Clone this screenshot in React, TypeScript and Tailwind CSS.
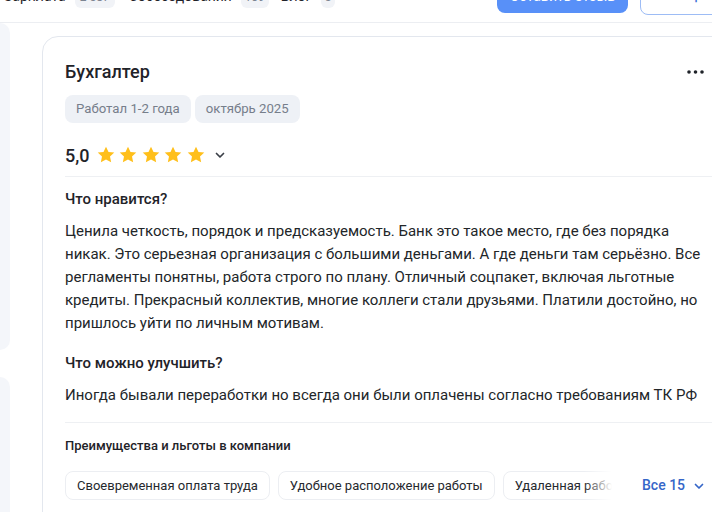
import React from "react";

const Star = () => (
  <svg width="20" height="20" viewBox="0 0 24 24" className="shrink-0">
    <path
      d="M12 2l3 6.3 6.9.8-5.1 4.8 1.4 6.9L12 17.4l-6.2 3.4 1.4-6.9-5.1-4.8 6.9-.8z"
      fill="#ffbf1a"
    />
  </svg>
);

const Chevron = ({ className }: { className?: string }) => (
  <svg width="12" height="12" viewBox="0 0 12 12" className={className}>
    <path d="M2.5 4.5L6 8l3.5-3.5" fill="none" stroke="currentColor" strokeWidth="1.7" strokeLinecap="round" strokeLinejoin="round" />
  </svg>
);

const chips = ["Своевременная оплата труда", "Удобное расположение работы", "Удаленная работа"];

export default function App() {
  return (
    <div className="w-[712px] h-[512px] overflow-hidden bg-white text-[#1f2329]" style={{ fontFamily: "Roboto, 'Noto Sans', sans-serif" }}>
      {/* Top nav (scrolled) */}
      <div className="h-[23px] border-b border-[#eceef2] overflow-hidden">
        <div className="-mt-[30px] h-[53px] flex items-center text-[14px]">
          <span className="ml-[4px]">Зарплата</span>
          <span className="ml-[9px] w-[40px] h-[22px] rounded-[6px] bg-[#f1f3f7] text-[#7c8491] text-[12px] flex items-center justify-center">2 587</span>
          <span className="ml-[14px]">Собеседования</span>
          <span className="ml-[9px] w-[28px] h-[22px] rounded-[6px] bg-[#f1f3f7] text-[#7c8491] text-[12px] flex items-center justify-center">109</span>
          <span className="ml-[12px]">Блог</span>
          <span className="ml-[10px] w-[14px] h-[22px] rounded-[6px] bg-[#f1f3f7] text-[#7c8491] text-[12px] flex items-center justify-center">3</span>
          <div className="ml-auto flex items-center gap-[12px] -mr-[40px]">
            <button className="w-[131px] h-[32px] rounded-[8px] bg-[#5890f8] text-white text-[14px]">Оставить отзыв</button>
            <button className="w-[112px] h-[34px] rounded-[8px] border border-[#9dbcf5] text-[#3b6fd6] text-[16px] mt-[2px]">+</button>
          </div>
        </div>
      </div>

      <div className="flex gap-[32px]">
        {/* Left column (cut off) */}
        <div className="w-[10px] shrink-0 flex flex-col gap-[27px]">
          <div className="h-[327px] rounded-r-[16px] bg-[#f4f6fa]" />
          <div className="h-[200px] rounded-r-[16px] bg-[#f4f6fa]" />
        </div>

        {/* Review card */}
        <div className="mt-[13px] w-[700px] shrink-0 rounded-[16px] border border-[#e3e7ee] pl-[22px] pr-[28px] pt-[23px] pb-[24px]">
          <div className="flex items-center justify-between h-[24px]">
            <h2 className="text-[18px] font-medium leading-[24px]">Бухгалтер</h2>
            <svg width="18" height="6" viewBox="0 0 18 6" className="mr-[9px]">
              <circle cx="3" cy="3" r="1.8" fill="#1f2329" />
              <circle cx="9.5" cy="3" r="1.8" fill="#1f2329" />
              <circle cx="16" cy="3" r="1.8" fill="#1f2329" />
            </svg>
          </div>

          <div className="mt-[11px] flex gap-[4px]">
            <span className="h-[28px] px-[11px] rounded-[8px] bg-[#eef1f6] text-[#767e8b] text-[13.2px] flex items-center">Работал 1-2 года</span>
            <span className="h-[28px] px-[11px] rounded-[8px] bg-[#eef1f6] text-[#767e8b] text-[13.2px] flex items-center">октябрь 2025</span>
          </div>

          <div className="mt-[20px] h-[24px] flex items-center">
            <span className="text-[18px] font-medium mr-[6px]">5,0</span>
            <div className="flex gap-[2.5px]">
              <Star />
              <Star />
              <Star />
              <Star />
              <Star />
            </div>
            <Chevron className="ml-[8px] text-[#3a3f47]" />
          </div>

          <div className="mt-[9px] mr-[-28px] border-t border-[#eef0f3]" />

          <h3 className="mt-[12px] text-[15px] font-medium leading-[20px]">Что нравится?</h3>
          <p className="mt-[11px] text-[15px] leading-[23px] text-[#222629]">
            Ценила четкость, порядок и предсказуемость. Банк это такое место, где без порядка никак. Это серьезная организация с большими деньгами. А где деньги там серьёзно. Все регламенты понятны, работа строго по плану. Отличный соцпакет, включая льготные кредиты. Прекрасный коллектив, многие коллеги стали друзьями. Платили достойно, но пришлось уйти по личным мотивам.
          </p>

          <h3 className="mt-[18px] text-[15px] font-medium leading-[20px]">Что можно улучшить?</h3>
          <p className="mt-[11px] text-[15px] leading-[23px] text-[#222629]">
            Иногда бывали переработки но всегда они были оплачены согласно требованиям ТК РФ
          </p>

          <div className="mt-[15px] mr-[-28px] border-t border-[#eef0f3]" />

          <h4 className="mt-[14px] text-[13px] font-medium leading-[18px]">Преимущества и льготы в компании</h4>

          <div className="mt-[16px] flex items-center">
            <div className="relative w-[547px] overflow-hidden flex gap-[8px]">
              {chips.map((c) => (
                <span key={c} className="shrink-0 h-[29px] px-[11px] rounded-[8px] border border-[#eceef2] text-[13px] text-[#26292e] flex items-center">
                  {c}
                </span>
              ))}
              <div className="absolute right-0 top-0 h-full w-[28px] bg-gradient-to-r from-white/0 to-white" />
            </div>
            <button className="ml-[30px] flex items-center gap-[8px] text-[14px] font-medium text-[#3566c8]">
              Все 15
              <Chevron />
            </button>
          </div>
        </div>
      </div>
    </div>
  );
}
